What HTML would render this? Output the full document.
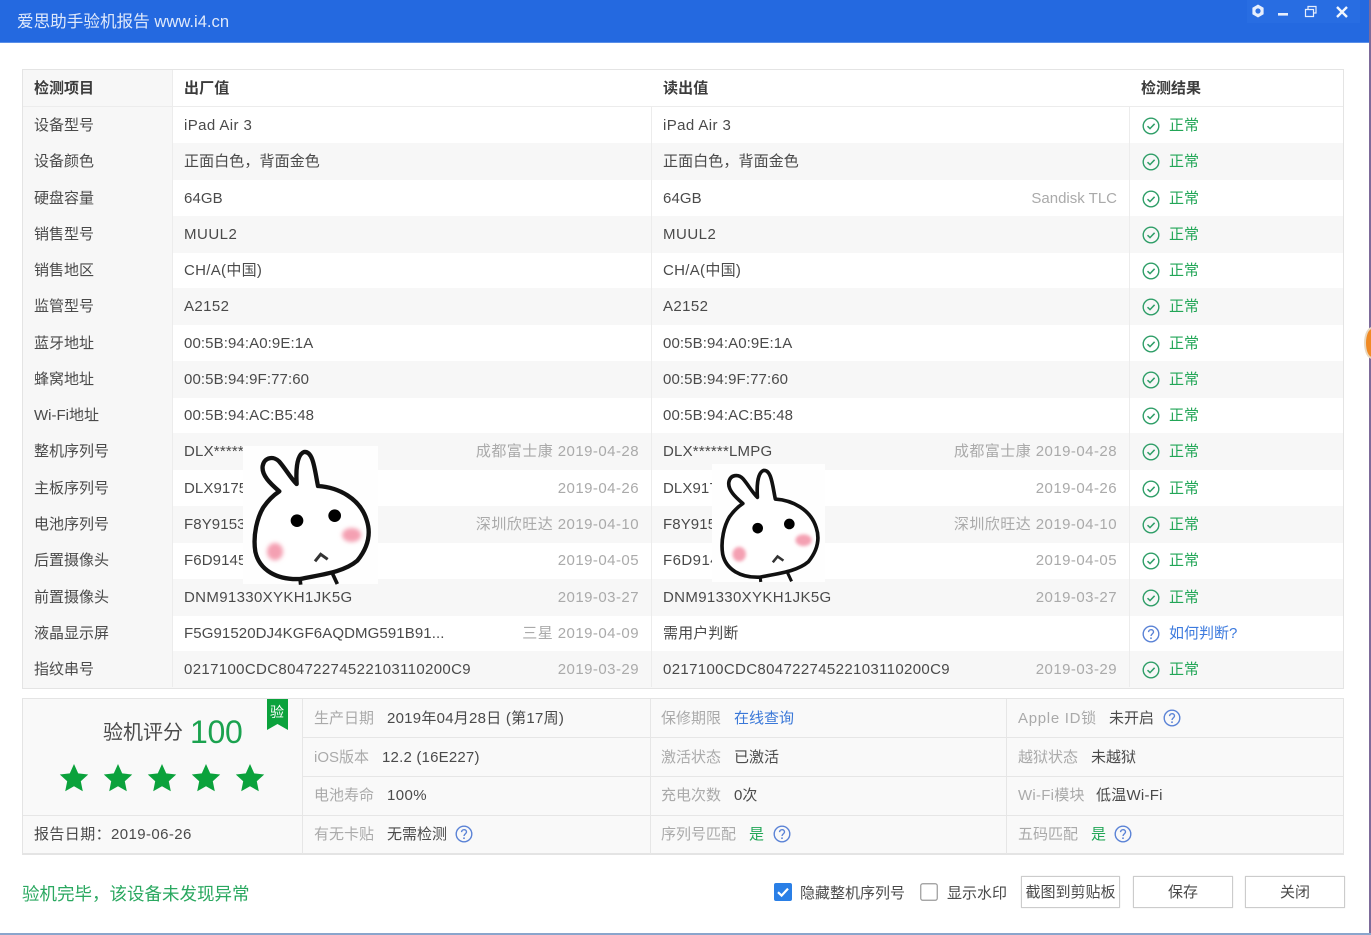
<!DOCTYPE html>
<html lang="zh"><head><meta charset="utf-8"><title>爱思助手验机报告</title>
<style>
*{box-sizing:border-box}
html,body{margin:0;padding:0;width:1371px;height:935px;overflow:hidden;background:#fff}
body{position:relative;font:15px/20px "Liberation Sans","Noto Sans CJK SC",sans-serif;color:#4a4a4a;filter:blur(.3px)}
div,span,svg{position:absolute}
span{white-space:nowrap}
#tb{left:0;top:0;width:1371px;height:43px;background:#2469e0;border-bottom:1px solid #5a8fe8}
#tt{left:17px;top:12px;color:#dfe9fb;font-size:16.6px}
#t{left:22px;top:69px;width:1322px;height:620px;border:2px solid #e4e4e4;border-width:1px 1px 2px 1px;background:#fff}
.r{left:23px;width:1320px;height:37px;background:linear-gradient(90deg,#f7f7f7 149px,transparent 149px)}
.g{background:#f7f7f7}
.c0{left:11px;top:9px}.c1{left:161px;top:9px;letter-spacing:.1px}.c2{left:640px;top:9px;letter-spacing:.1px}
.n1{right:704px;top:9px;color:#aaa;letter-spacing:.45px}.n2{right:226px;top:9px;color:#aaa;letter-spacing:.45px}
.ok{left:1146px;top:9px;color:#22a657}
.q{left:1146px;top:9px;color:#3c7ade}
.i{left:1119px;top:10px;width:18px;height:18px}
.h{font-weight:bold;color:#3c3c3c}
.v{background:#ececec;width:1px}
.l{color:#aaa}.b{color:#3a78d8}.y{color:#22a657}
.pq{width:18px;height:18px}
.ls{letter-spacing:.35px}
.btn{top:876px;height:32px;border:1px solid #ccc;background:#fff;text-align:center;line-height:32px;color:#4a4a4a;box-shadow:0 0 1px #ddd}
</style></head>
<body>
<svg width="0" height="0" style="left:0;top:0">
<defs>
<filter id="bl" x="-60%" y="-60%" width="220%" height="220%"><feGaussianBlur stdDeviation="6"/></filter>
<symbol id="ok" viewBox="0 0 18 18"><circle cx="9" cy="9" r="7.8" fill="none" stroke="#2f9e68" stroke-width="1.4"/><path d="M5.5 9.2 8 11.6 12.6 6.8" fill="none" stroke="#2f9e68" stroke-width="1.5"/></symbol>
<symbol id="qq" viewBox="0 0 18 18"><circle cx="9" cy="9" r="7.8" fill="none" stroke="#5b83d6" stroke-width="1.4"/><path d="M6.6 7.1C6.7 3.9 11.5 4 11.5 7C11.5 8.8 9 9 9 11" fill="none" stroke="#5b83d6" stroke-width="1.4"/><circle cx="9" cy="13.2" r=".9" fill="#5b83d6"/></symbol>
<symbol id="star" viewBox="0 0 30 30"><path d="M15 1 19.2 10.4 29.2 11.5 21.8 18.3 23.8 28.3 15 23.2 6.2 28.3 8.2 18.3.8 11.5 10.8 10.4Z" fill="#0ba23c"/></symbol>
<symbol id="rab" viewBox="0 0 780 510" overflow="visible">
<path d="M328 184C300 160 274 135 278 108C283 80 312 78 328 95C348 118 362 145 380 162C378 130 378 75 402 66C430 62 434 120 444 168C505 172 570 205 590 270C605 315 592 355 562 392C520 428 450 434 390 447C320 450 268 420 256 365C248 315 262 262 280 232C294 212 310 196 328 184Z" fill="#fff" stroke="#111" stroke-width="13" stroke-linejoin="round"/>
<ellipse cx="315" cy="365" rx="24" ry="26" fill="#f4a0b2" filter="url(#bl)"/><ellipse cx="545" cy="315" rx="29" ry="21" fill="#f4a0b2" filter="url(#bl)"/>
<circle cx="381" cy="272" r="19" fill="#000"/><circle cx="494" cy="257" r="19" fill="#000"/>
<path d="M435 394 452 373 473 388" fill="none" stroke="#333" stroke-width="9"/>
<path d="M390 446 392 464M488 432 502 462" fill="none" stroke="#111" stroke-width="11"/>
</symbol>
</defs></svg>

<div id="tb"><span id="tt">爱思助手验机报告 www.i4.cn</span>
<div style="left:1247px;top:0;width:113px;height:23px;background:#286de2"></div>
<svg style="left:1250px;top:3px" width="16" height="16" viewBox="0 0 16 16"><path d="M8 1.5 13.6 4.7V11.3L8 14.5 2.4 11.3V4.7Z" fill="#e6eefc"/><circle cx="8" cy="8" r="2.6" fill="#2e71e4"/></svg>
<svg style="left:1277px;top:10px" width="14" height="8"><rect x="1" y="3" width="10" height="2.6" fill="#e6eefc"/></svg>
<svg style="left:1304px;top:5px" width="14" height="13" viewBox="0 0 14 13"><path d="M1.5 4.5H9.5V11.5H1.5ZM4 4.5V1.5H12V8H9.5" fill="none" stroke="#e6eefc" stroke-width="1.2"/></svg>
<svg style="left:1335px;top:5px" width="14" height="14" viewBox="0 0 14 14"><path d="M2 2 12 12M12 2 2 12" stroke="#f2f6fe" stroke-width="2.4" fill="none"/></svg>
</div>

<div id="t"></div>
<div class="r h" style="top:70px;height:36px"><span class="c0">检测项目</span><span class="c1">出厂值</span><span class="c2">读出值</span><span style="left:1118px;top:9px">检测结果</span></div>
<div style="left:23px;top:106px;width:1320px;height:1px;background:#ececec"></div>

<div class="r" style="top:107px"><span class="c0">设备型号</span><span class="c1" style="letter-spacing:.4px">iPad Air 3</span><span class="c2" style="letter-spacing:.4px">iPad Air 3</span><svg class="i"><use href="#ok"/></svg><span class="ok">正常</span></div>
<div class="r g" style="top:143.3px"><span class="c0">设备颜色</span><span class="c1">正面白色，背面金色</span><span class="c2">正面白色，背面金色</span><svg class="i"><use href="#ok"/></svg><span class="ok">正常</span></div>
<div class="r" style="top:179.5px"><span class="c0">硬盘容量</span><span class="c1">64GB</span><span class="c2">64GB</span><span class="n2" style="letter-spacing:0">Sandisk TLC</span><svg class="i"><use href="#ok"/></svg><span class="ok">正常</span></div>
<div class="r g" style="top:215.8px"><span class="c0">销售型号</span><span class="c1 ls" style="letter-spacing:.5px">MUUL2</span><span class="c2" style="letter-spacing:.5px">MUUL2</span><svg class="i"><use href="#ok"/></svg><span class="ok">正常</span></div>
<div class="r" style="top:252.1px"><span class="c0">销售地区</span><span class="c1" style="letter-spacing:.3px">CH/A(中国)</span><span class="c2" style="letter-spacing:.3px">CH/A(中国)</span><svg class="i"><use href="#ok"/></svg><span class="ok">正常</span></div>
<div class="r g" style="top:288.3px"><span class="c0">监管型号</span><span class="c1" style="letter-spacing:.4px">A2152</span><span class="c2" style="letter-spacing:.4px">A2152</span><svg class="i"><use href="#ok"/></svg><span class="ok">正常</span></div>
<div class="r" style="top:324.6px"><span class="c0">蓝牙地址</span><span class="c1">00:5B:94:A0:9E:1A</span><span class="c2">00:5B:94:A0:9E:1A</span><svg class="i"><use href="#ok"/></svg><span class="ok">正常</span></div>
<div class="r g" style="top:360.9px"><span class="c0">蜂窝地址</span><span class="c1">00:5B:94:9F:77:60</span><span class="c2">00:5B:94:9F:77:60</span><svg class="i"><use href="#ok"/></svg><span class="ok">正常</span></div>
<div class="r" style="top:397.2px"><span class="c0">Wi-Fi地址</span><span class="c1">00:5B:94:AC:B5:48</span><span class="c2">00:5B:94:AC:B5:48</span><svg class="i"><use href="#ok"/></svg><span class="ok">正常</span></div>
<div class="r g" style="top:433.4px"><span class="c0">整机序列号</span><span class="c1" style="letter-spacing:.2px">DLX******LMPG</span><span class="n1">成都富士康 2019-04-28</span><span class="c2" style="letter-spacing:.2px">DLX******LMPG</span><span class="n2">成都富士康 2019-04-28</span><svg class="i"><use href="#ok"/></svg><span class="ok">正常</span></div>
<div class="r" style="top:469.7px"><span class="c0">主板序列号</span><span class="c1">DLX91753</span><span class="n1">2019-04-26</span><span class="c2">DLX91753</span><span class="n2">2019-04-26</span><svg class="i"><use href="#ok"/></svg><span class="ok">正常</span></div>
<div class="r g" style="top:506px"><span class="c0">电池序列号</span><span class="c1">F8Y91530</span><span class="n1">深圳欣旺达 2019-04-10</span><span class="c2">F8Y91530</span><span class="n2">深圳欣旺达 2019-04-10</span><svg class="i"><use href="#ok"/></svg><span class="ok">正常</span></div>
<div class="r" style="top:542.2px"><span class="c0">后置摄像头</span><span class="c1">F6D91450</span><span class="n1">2019-04-05</span><span class="c2" style="letter-spacing:.45px">F6D91450XYKH1JK</span><span class="n2">2019-04-05</span><svg class="i"><use href="#ok"/></svg><span class="ok">正常</span></div>
<div class="r g" style="top:578.5px"><span class="c0">前置摄像头</span><span class="c1" style="letter-spacing:.35px">DNM91330XYKH1JK5G</span><span class="n1">2019-03-27</span><span class="c2" style="letter-spacing:.35px">DNM91330XYKH1JK5G</span><span class="n2">2019-03-27</span><svg class="i"><use href="#ok"/></svg><span class="ok">正常</span></div>
<div class="r" style="top:614.8px"><span class="c0">液晶显示屏</span><span class="c1">F5G91520DJ4KGF6AQDMG591B91...</span><span class="n1">三星 2019-04-09</span><span class="c2">需用户判断</span><svg class="i"><use href="#qq"/></svg><span class="q">如何判断?</span></div>
<div class="r g" style="top:651px"><span class="c0">指纹串号</span><span class="c1" style="letter-spacing:.35px">0217100CDC80472274522103110200C9</span><span class="n1">2019-03-29</span><span class="c2" style="letter-spacing:.35px">0217100CDC80472274522103110200C9</span><span class="n2">2019-03-29</span><svg class="i"><use href="#ok"/></svg><span class="ok">正常</span></div>

<div class="v" style="left:172px;top:70px;height:617px"></div>
<div class="v" style="left:651px;top:107px;height:580px"></div>
<div class="v" style="left:1129px;top:107px;height:580px"></div>

<div style="left:243px;top:446px;width:135px;height:138px;background:#fefefe"></div>
<svg style="left:170px;top:430px" width="260" height="170"><use href="#rab" width="260" height="170"/></svg>
<div style="left:712px;top:464px;width:113px;height:118px;background:#fefefe"></div>
<svg style="left:650.7px;top:451.5px" width="218.4" height="142.8"><use href="#rab" width="218.4" height="142.8"/></svg>

<div style="left:22px;top:698px;width:1322px;height:157px;background:#f9f9f9;border:1px solid #e4e4e4;border-bottom-width:2px"></div>
<div class="v" style="left:302px;top:699px;height:155px;background:#e6e6e6"></div>
<div class="v" style="left:650px;top:699px;height:155px;background:#e6e6e6"></div>
<div class="v" style="left:1006px;top:699px;height:155px;background:#e6e6e6"></div>
<div style="left:303px;top:737px;width:1040px;height:1px;background:#e6e6e6"></div>
<div style="left:303px;top:776px;width:1040px;height:1px;background:#e6e6e6"></div>
<div style="left:23px;top:815px;width:1320px;height:1px;background:#e6e6e6"></div>

<span style="left:103px;top:719px;font-size:20px;line-height:28px;color:#4a4a4a">验机评分</span>
<span style="left:190px;top:712px;font-size:32px;line-height:40px;letter-spacing:-.3px;color:#1ba24f">100</span>
<svg style="left:267px;top:699px" width="21" height="31"><path d="M0 0H21V31L10.5 25 0 31Z" fill="#0ba23c"/></svg>
<span style="left:270px;top:703px;font-size:14px;color:#fff;line-height:18px">验</span>
<svg style="left:59px;top:763px" width="30" height="30"><use href="#star"/></svg>
<svg style="left:103px;top:763px" width="30" height="30"><use href="#star"/></svg>
<svg style="left:147px;top:763px" width="30" height="30"><use href="#star"/></svg>
<svg style="left:191px;top:763px" width="30" height="30"><use href="#star"/></svg>
<svg style="left:235px;top:763px" width="30" height="30"><use href="#star"/></svg>
<span style="left:34px;top:825px;letter-spacing:.4px">报告日期：2019-06-26</span>

<span class="l" style="left:314px;top:709px">生产日期</span><span style="left:387px;top:709px;letter-spacing:.25px">2019年04月28日 (第17周)</span>
<span class="l" style="left:314px;top:748px">iOS版本</span><span style="left:382px;top:748px;letter-spacing:.2px">12.2 (16E227)</span>
<span class="l" style="left:314px;top:786px">电池寿命</span><span style="left:387px;top:786px;letter-spacing:.4px">100%</span>
<span class="l" style="left:314px;top:825px">有无卡贴</span><span style="left:387px;top:825px">无需检测</span><svg class="pq" style="left:455px;top:825px"><use href="#qq"/></svg>

<span class="l" style="left:661px;top:709px">保修期限</span><span class="b" style="left:734px;top:709px">在线查询</span>
<span class="l" style="left:661px;top:748px">激活状态</span><span style="left:734px;top:748px">已激活</span>
<span class="l" style="left:661px;top:786px">充电次数</span><span style="left:734px;top:786px">0次</span>
<span class="l" style="left:661px;top:825px">序列号匹配</span><span class="y" style="left:749px;top:825px">是</span><svg class="pq" style="left:773px;top:825px"><use href="#qq"/></svg>

<span class="l" style="left:1018px;top:709px;letter-spacing:.7px">Apple ID锁</span><span style="left:1109px;top:709px">未开启</span><svg class="pq" style="left:1163px;top:709px"><use href="#qq"/></svg>
<span class="l" style="left:1018px;top:748px">越狱状态</span><span style="left:1091px;top:748px">未越狱</span>
<span class="l" style="left:1018px;top:786px;letter-spacing:.25px">Wi-Fi模块</span><span style="left:1096px;top:786px;letter-spacing:.25px">低温Wi-Fi</span>
<span class="l" style="left:1018px;top:825px">五码匹配</span><span class="y" style="left:1091px;top:825px">是</span><svg class="pq" style="left:1114px;top:825px"><use href="#qq"/></svg>

<span style="left:22px;top:884px;font-size:17.5px;color:#2aa860">验机完毕，该设备未发现异常</span>
<svg style="left:774px;top:883px" width="18" height="18"><rect width="18" height="18" rx="2" fill="#2a7fe6"/><path d="M4 9.2 7.6 12.6 14 5.6" fill="none" stroke="#fff" stroke-width="2.2"/></svg>
<span style="left:800px;top:884px">隐藏整机序列号</span>
<svg style="left:920px;top:883px" width="19" height="18"><rect x=".75" y=".75" width="16.5" height="16.5" rx="2" fill="#fff" stroke="#999" stroke-width="1.2"/></svg>
<span style="left:947px;top:884px">显示水印</span>
<div class="btn" style="left:1021px;width:99px">截图到剪贴板</div>
<div class="btn" style="left:1133px;width:100px">保存</div>
<div class="btn" style="left:1245px;width:100px">关闭</div>

<div style="left:1369px;top:0;width:2px;height:935px;background:#7d6a9a"></div>
<div style="left:1364px;top:327px;width:16px;height:32px;border-radius:50%;background:#f08a24;border:2px solid #e8d8c0"></div>
<div style="left:0;top:933px;width:1371px;height:2px;background:#8aa5cc"></div>
</body></html>
